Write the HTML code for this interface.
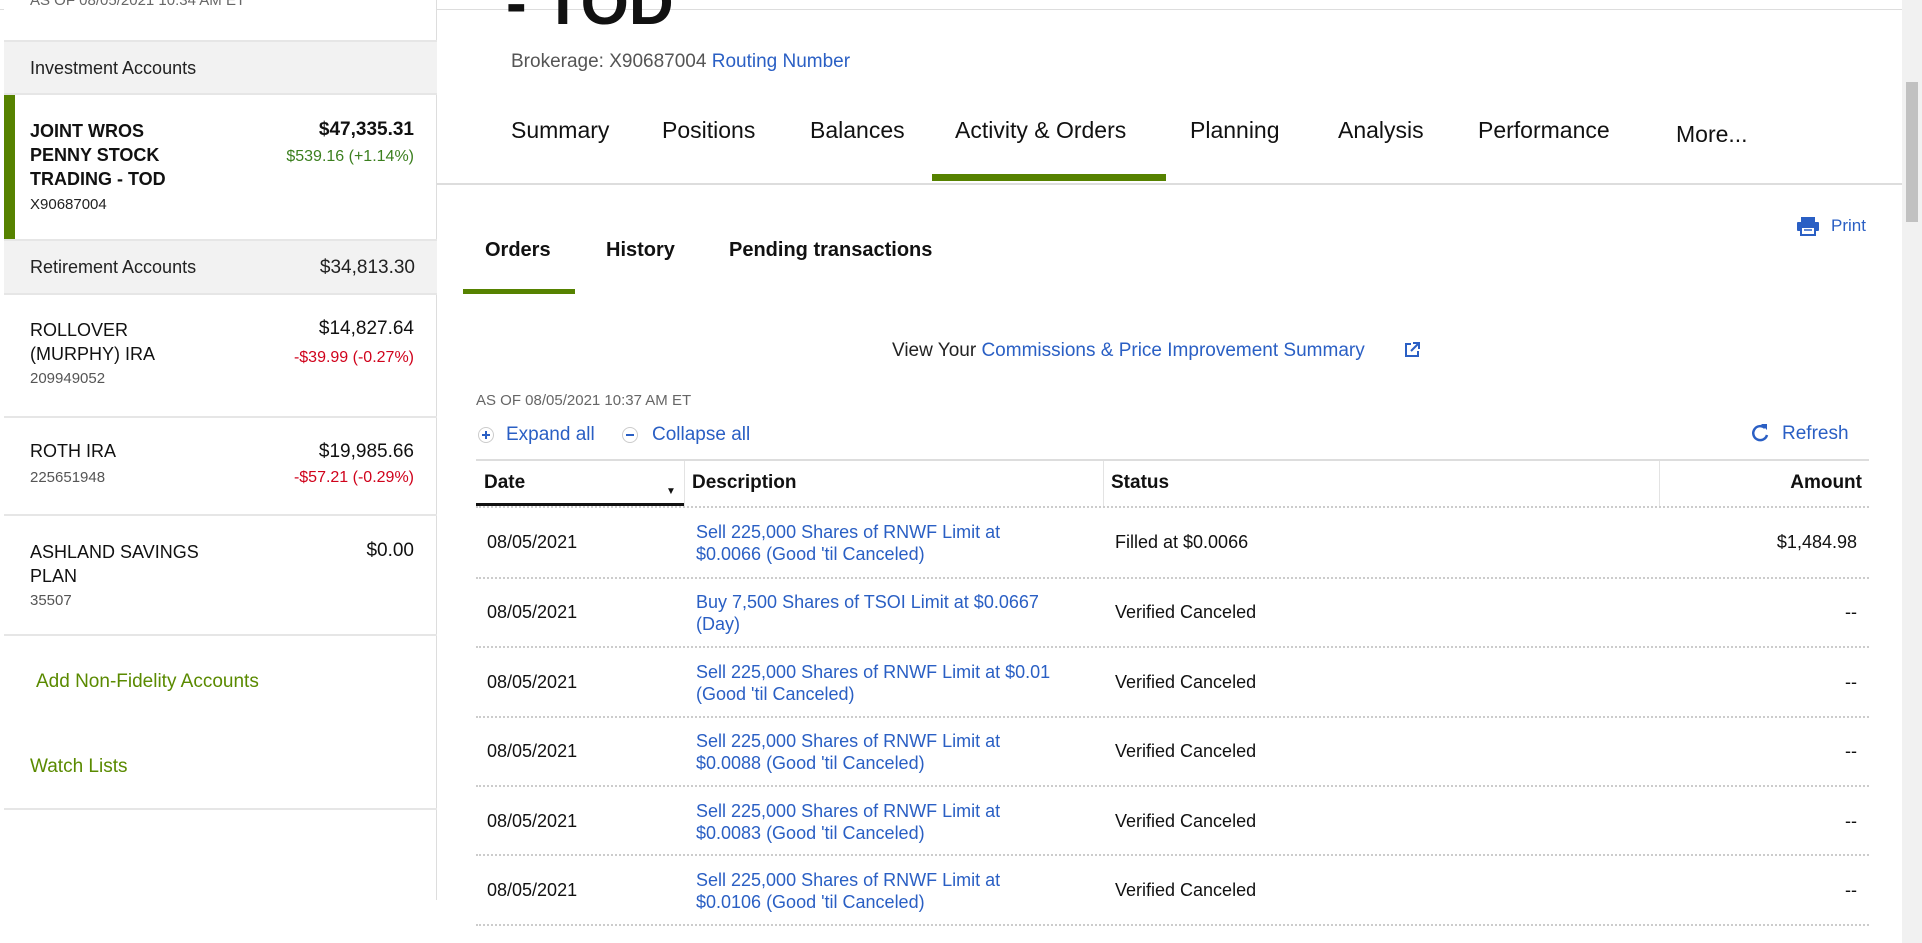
<!DOCTYPE html>
<html><head><meta charset="utf-8"><style>
*{margin:0;padding:0;box-sizing:border-box}
body{width:1922px;height:943px;overflow:hidden;background:#fff;font-family:"Liberation Sans",sans-serif;color:#111;position:relative}
.a{position:absolute;white-space:nowrap}
.blue{color:#2a5fc4}
.side{position:absolute;left:4px;top:0;width:433px;height:900px;border-right:1px solid #ddd;background:#fff}
.hdr{position:absolute;left:0;width:433px;background:#f2f2f2;border-top:2px solid #e6e6e6;border-bottom:2px solid #e6e6e6}
.sep{position:absolute;left:0;width:433px;height:2px;background:#e6e6e6}
.nav{font-size:23px;color:#111;top:117px}
.sub{font-size:20px;font-weight:bold;top:239px}
.dot{position:absolute;left:476px;width:1393px;border-top:2px dotted #ccc}
.cell{font-size:18px;line-height:22px}
</style></head><body>
<div class="a" style="left:0;top:9px;width:1902px;height:1px;background:#ddd"></div>
<div class="side">
  <div class="a" style="left:26px;top:-8px;font-size:15px;color:#666">AS OF 08/05/2021 10:34 AM ET</div>
  <div class="hdr" style="top:40px;height:55px"><div class="a" style="left:26px;top:16px;font-size:18px;color:#222">Investment Accounts</div></div>
  <div class="a" style="left:0;top:95px;width:11px;height:145px;background:#568200"></div>
  <div class="a" style="left:26px;top:119px;font-size:18px;font-weight:bold;line-height:24px">JOINT WROS<br>PENNY STOCK<br>TRADING - TOD</div>
  <div class="a" style="left:26px;top:196px;font-size:15px;color:#222">X90687004</div>
  <div class="a" style="right:22px;top:119px;font-size:19px;font-weight:bold">$47,335.31</div>
  <div class="a" style="right:22px;top:148px;font-size:16px;color:#3b7f1e">$539.16 (+1.14%)</div>
  <div class="hdr" style="top:239px;height:56px"><div class="a" style="left:26px;top:16px;font-size:18px;color:#222">Retirement Accounts</div><div class="a" style="right:22px;top:16px;font-size:19px;color:#222">$34,813.30</div></div>
  <div class="a" style="left:26px;top:318px;font-size:18px;line-height:24px">ROLLOVER<br>(MURPHY) IRA</div>
  <div class="a" style="left:26px;top:370px;font-size:15px;color:#555">209949052</div>
  <div class="a" style="right:22px;top:318px;font-size:19px">$14,827.64</div>
  <div class="a" style="right:22px;top:349px;font-size:16px;color:#d0021b">-$39.99 (-0.27%)</div>
  <div class="sep" style="top:416px"></div>
  <div class="a" style="left:26px;top:441px;font-size:18px">ROTH IRA</div>
  <div class="a" style="left:26px;top:469px;font-size:15px;color:#555">225651948</div>
  <div class="a" style="right:22px;top:441px;font-size:19px">$19,985.66</div>
  <div class="a" style="right:22px;top:469px;font-size:16px;color:#d0021b">-$57.21 (-0.29%)</div>
  <div class="sep" style="top:514px"></div>
  <div class="a" style="left:26px;top:540px;font-size:18px;line-height:24px">ASHLAND SAVINGS<br>PLAN</div>
  <div class="a" style="left:26px;top:592px;font-size:15px;color:#555">35507</div>
  <div class="a" style="right:22px;top:540px;font-size:19px">$0.00</div>
  <div class="sep" style="top:634px"></div>
  <div class="a" style="left:32px;top:671px;font-size:19px;color:#5a8a00">Add Non-Fidelity Accounts</div>
  <div class="a" style="left:26px;top:756px;font-size:19px;color:#5a8a00">Watch Lists</div>
  <div class="sep" style="top:808px"></div>
</div>
<div class="a" style="left:0;top:40px;width:4px;height:860px;background:#fff"></div>

<div class="a" style="left:506px;top:-27px;font-size:62px;font-weight:bold;line-height:62px">- TOD</div>
<div class="a" style="left:511px;top:51px;font-size:19px;color:#555">Brokerage: X90687004 <span class="blue">Routing Number</span></div>
<div class="a nav" style="left:511px">Summary</div>
<div class="a nav" style="left:662px">Positions</div>
<div class="a nav" style="left:810px">Balances</div>
<div class="a nav" style="left:955px">Activity &amp; Orders</div>
<div class="a nav" style="left:1190px">Planning</div>
<div class="a nav" style="left:1338px">Analysis</div>
<div class="a nav" style="left:1478px">Performance</div>
<div class="a nav" style="left:1676px;top:121px">More...</div>
<div class="a" style="left:932px;top:174px;width:234px;height:7px;background:#568200"></div>
<div class="a" style="left:437px;top:183px;width:1465px;height:2px;background:#ddd"></div>

<svg class="a" style="left:1796px;top:216px" width="24" height="20" viewBox="0 0 24 20"><rect x="5" y="1" width="14" height="5" fill="#2a5fc4"/><rect x="1" y="6" width="22" height="9" rx="1" fill="#2a5fc4"/><rect x="5" y="11" width="14" height="8" fill="#fff" stroke="#2a5fc4" stroke-width="2"/><line x1="8" y1="14" x2="16" y2="14" stroke="#2a5fc4" stroke-width="1.5"/></svg>
<div class="a blue" style="left:1831px;top:216px;font-size:17px">Print</div>

<div class="a sub" style="left:485px">Orders</div>
<div class="a sub" style="left:606px">History</div>
<div class="a sub" style="left:729px">Pending transactions</div>
<div class="a" style="left:463px;top:289px;width:112px;height:5px;background:#568200"></div>

<div class="a" style="left:892px;top:340px;font-size:19px;color:#222">View Your <span class="blue">Commissions &amp; Price Improvement Summary</span></div>
<svg class="a" style="left:1403px;top:341px" width="18" height="18" viewBox="0 0 18 18"><path d="M8 3H3v12h12v-5" fill="none" stroke="#2a5fc4" stroke-width="2"/><path d="M10 2h6v6M16 2L8 10" fill="none" stroke="#2a5fc4" stroke-width="2"/></svg>

<div class="a" style="left:476px;top:392px;font-size:15px;color:#666">AS OF 08/05/2021 10:37 AM ET</div>
<svg class="a" style="left:477px;top:426px" width="18" height="18"><circle cx="9" cy="9" r="7.5" fill="none" stroke="#ccc"/><path d="M9 5v8M5 9h8" stroke="#2a5fc4" stroke-width="2"/></svg>
<div class="a blue" style="left:506px;top:424px;font-size:19px">Expand all</div>
<svg class="a" style="left:621px;top:426px" width="18" height="18"><circle cx="9" cy="9" r="7.5" fill="none" stroke="#ccc"/><path d="M5 9h8" stroke="#2a5fc4" stroke-width="2"/></svg>
<div class="a blue" style="left:652px;top:424px;font-size:19px">Collapse all</div>
<svg class="a" style="left:1750px;top:422px" width="20" height="22" viewBox="0 0 20 22"><path d="M15 6A7 7 0 1 0 17 13" fill="none" stroke="#2a5fc4" stroke-width="2.5"/><path d="M11 2h6v6z" fill="#2a5fc4"/></svg>
<div class="a blue" style="left:1782px;top:423px;font-size:19px">Refresh</div>

<div class="a" style="left:476px;top:459px;width:1393px;height:2px;background:#ddd"></div>
<div class="a" style="left:684px;top:461px;width:1px;height:45px;background:#e3e3e3"></div>
<div class="a" style="left:1103px;top:461px;width:1px;height:45px;background:#e3e3e3"></div>
<div class="a" style="left:1659px;top:461px;width:1px;height:45px;background:#e3e3e3"></div>
<div class="a" style="left:484px;top:472px;font-size:19px;font-weight:bold">Date</div>
<div class="a" style="left:666px;top:486px;font-size:10px">▼</div>
<div class="a" style="left:692px;top:472px;font-size:19px;font-weight:bold">Description</div>
<div class="a" style="left:1111px;top:472px;font-size:19px;font-weight:bold">Status</div>
<div class="a" style="right:60px;top:472px;font-size:19px;font-weight:bold">Amount</div>
<div class="a" style="left:476px;top:503px;width:208px;height:3px;background:#111"></div>
<div class="dot" style="top:506px"></div>

<div class="a cell" style="left:487px;top:531px">08/05/2021</div>
<div class="a cell blue" style="left:696px;top:521px">Sell 225,000 Shares of RNWF Limit at<br>$0.0066 (Good 'til Canceled)</div>
<div class="a cell" style="left:1115px;top:531px">Filled at $0.0066</div>
<div class="a cell" style="right:65px;top:531px">$1,484.98</div>
<div class="dot" style="top:577px"></div>

<div class="a cell" style="left:487px;top:601px">08/05/2021</div>
<div class="a cell blue" style="left:696px;top:591px">Buy 7,500 Shares of TSOI Limit at $0.0667<br>(Day)</div>
<div class="a cell" style="left:1115px;top:601px">Verified Canceled</div>
<div class="a cell" style="right:65px;top:601px">--</div>
<div class="dot" style="top:646px"></div>

<div class="a cell" style="left:487px;top:671px">08/05/2021</div>
<div class="a cell blue" style="left:696px;top:661px">Sell 225,000 Shares of RNWF Limit at $0.01<br>(Good 'til Canceled)</div>
<div class="a cell" style="left:1115px;top:671px">Verified Canceled</div>
<div class="a cell" style="right:65px;top:671px">--</div>
<div class="dot" style="top:716px"></div>

<div class="a cell" style="left:487px;top:740px">08/05/2021</div>
<div class="a cell blue" style="left:696px;top:730px">Sell 225,000 Shares of RNWF Limit at<br>$0.0088 (Good 'til Canceled)</div>
<div class="a cell" style="left:1115px;top:740px">Verified Canceled</div>
<div class="a cell" style="right:65px;top:740px">--</div>
<div class="dot" style="top:785px"></div>

<div class="a cell" style="left:487px;top:810px">08/05/2021</div>
<div class="a cell blue" style="left:696px;top:800px">Sell 225,000 Shares of RNWF Limit at<br>$0.0083 (Good 'til Canceled)</div>
<div class="a cell" style="left:1115px;top:810px">Verified Canceled</div>
<div class="a cell" style="right:65px;top:810px">--</div>
<div class="dot" style="top:854px"></div>

<div class="a cell" style="left:487px;top:879px">08/05/2021</div>
<div class="a cell blue" style="left:696px;top:869px">Sell 225,000 Shares of RNWF Limit at<br>$0.0106 (Good 'til Canceled)</div>
<div class="a cell" style="left:1115px;top:879px">Verified Canceled</div>
<div class="a cell" style="right:65px;top:879px">--</div>
<div class="dot" style="top:924px"></div>

<div class="a" style="left:1902px;top:0;width:20px;height:943px;background:#f1f1f1"></div>
<div class="a" style="left:1906px;top:82px;width:12px;height:140px;background:#c1c1c1"></div>
</body></html>
